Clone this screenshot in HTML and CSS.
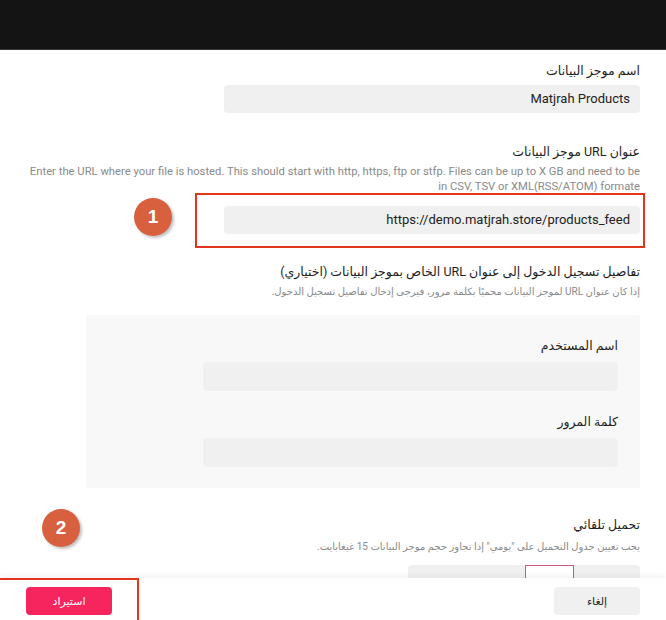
FILE: index.html
```html
<!DOCTYPE html>
<html lang="ar" dir="rtl">
<head>
    <meta charset="UTF-8">
    <title>استيراد موجز البيانات</title>
    <meta name="viewport" content="width=device-width, initial-scale=1">
    <link rel="stylesheet" href="styles.css">
</head>
<body>
<div class="topbar"></div>

<main class="form">
    <div class="field">
        <label class="label">اسم موجز البيانات</label>
        <div class="input">Matjrah Products</div>
    </div>

    <div class="field field-url">
        <label class="label">عنوان URL موجز البيانات</label>
        <p class="help help-en" dir="ltr">Enter the URL where your file is hosted. This should start with http, https, ftp or stfp. Files can be up to X GB and need to be<br>in CSV, TSV or XML(RSS/ATOM) formate</p>
        <div class="input">https://demo.matjrah.store/products_feed</div>
    </div>

    <div class="field field-login">
        <label class="label">تفاصيل تسجيل الدخول إلى عنوان URL الخاص بموجز البيانات (اختياري)</label>
        <p class="help">إذا كان عنوان URL لموجز البيانات محميًا بكلمة مرور، فيرجى إدخال تفاصيل تسجيل الدخول.</p>
        <div class="panel">
            <label class="label">اسم المستخدم</label>
            <div class="input"></div>
            <label class="label label-gap">كلمة المرور</label>
            <div class="input"></div>
        </div>
    </div>

    <div class="field field-auto">
        <label class="label">تحميل تلقائي</label>
        <p class="help">يجب تعيين جدول التحميل على "يومي" إذا تجاوز حجم موجز البيانات 15 غيغابايت.</p>
        <div class="segments">
            <span class="seg seg-first"></span>
            <span class="seg seg-active"></span>
            <span class="seg"></span>
        </div>
    </div>
</main>

<footer class="footer">
    <button class="btn btn-cancel">إلغاء</button>
    <button class="btn btn-import">استيراد</button>
</footer>

<!-- annotation marks -->
<div class="mark mark-box mark-box-1"></div>
<div class="mark mark-num mark-num-1">1</div>
<div class="mark mark-box mark-box-2"></div>
<div class="mark mark-num mark-num-2">2</div>
</body>
</html>
```

FILE: styles.css
```css
html, body {
    margin: 0;
    height: 100%;
}

body {
    position: relative;
    display: flex;
    flex-direction: column;
    overflow: hidden;
    background: #fff;
    color: #222;
    font-family: Roboto, "DejaVu Sans", sans-serif;
}

.topbar {
    height: 49px;
    flex: none;
    background: #141414;
    border-bottom: 1px solid #3a3a3a;
}

.form {
    flex: 1;
    overflow: hidden;
    padding: 11px 26px 0;
}

.field {
    display: flex;
    flex-direction: column;
    align-items: flex-start;
}

.field-url {
    margin-top: 29px;
}

.field-login {
    margin-top: 28px;
}

.field-auto {
    margin-top: 27px;
}

.label {
    display: block;
    font-size: 12.5px;
    line-height: 20px;
    color: #1e1e1e;
    margin-bottom: 4px;
}

.input {
    box-sizing: border-box;
    width: 416px;
    height: 28px;
    padding: 0 10px;
    background: #f0f0f0;
    border-radius: 4px;
    font-size: 13px;
    line-height: 28px;
    color: #222;
}

.help {
    margin: -2px 0 6px;
    font-size: 10px;
    line-height: 15px;
    color: #8a8a8a;
}

.help-en {
    align-self: stretch;
    text-align: right;
    font-size: 11.25px;
    white-space: nowrap;
    margin-bottom: 12px;
}

.field-login .help {
    margin-bottom: 16px;
}

.panel {
    box-sizing: border-box;
    align-self: stretch;
    margin-left: 60px;
    padding: 21px 22px;
    background: #f8f8f8;
    border-radius: 2px;
}

.panel .label {
    margin-bottom: 6px;
}

.panel .input {
    height: 29px;
    width: 415px;
}

.panel .label-gap {
    margin-top: 21px;
}

.field-auto .help {
    margin-top: 0;
    margin-bottom: 11px;
}

.segments {
    display: flex;
    width: 232px;
    height: 28px;
    background: #f0f0f0;
    border-radius: 4px;
}

.seg {
    flex: 1;
}

.seg-first {
    flex: none;
    width: 66px;
}

.seg-active {
    flex: none;
    width: 49px;
    box-sizing: border-box;
    background: #fff;
    border: 1px solid #d2557a;
}

.footer {
    flex: none;
    height: 42px;
    display: flex;
    justify-content: space-between;
    align-items: center;
    padding: 0 26px;
    background: #fff;
    box-shadow: 0 -2px 6px rgba(0, 0, 0, 0.06);
    position: relative;
}

.btn {
    width: 86px;
    height: 28px;
    border: 0;
    border-radius: 4px;
    font-family: inherit;
    font-size: 11px;
    cursor: pointer;
    margin-top: 4px;
}

.btn-cancel {
    background: #f0f0f0;
    color: #222;
}

.btn-import {
    background: #f7255d;
    color: #fff;
}

.mark {
    position: absolute;
}

.mark-box {
    box-sizing: border-box;
    border: 2px solid #e3341e;
}

.mark-box-1 {
    left: 195px;
    top: 193px;
    width: 450px;
    height: 55px;
}

.mark-box-2 {
    left: -2px;
    top: 578px;
    width: 141px;
    height: 48px;
}

.mark-num {
    width: 38px;
    height: 38px;
    border-radius: 50%;
    background: #d9603f;
    color: #fff;
    font-family: "Liberation Sans", Arial, sans-serif;
    font-weight: bold;
    font-size: 19px;
    line-height: 38px;
    text-align: center;
    box-shadow: 2px 2px 3px rgba(0, 0, 0, 0.25);
}

.mark-num-1 {
    left: 134px;
    top: 198px;
}

.mark-num-2 {
    left: 42px;
    top: 509px;
}
```
